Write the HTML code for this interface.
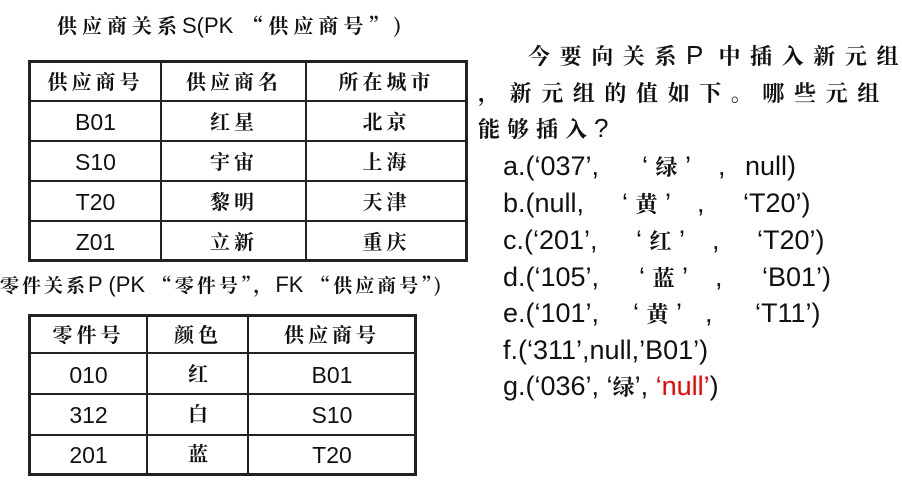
<!DOCTYPE html>
<html><head><meta charset="utf-8"><style>
body{margin:0;background:#fff;}
#p{position:relative;width:902px;height:488px;overflow:hidden;background:#fff;font-family:"Liberation Sans","Noto Sans CJK SC",sans-serif;color:#111;}
.a{position:absolute;white-space:pre;}
.h{position:absolute;height:2px;background:#222;}
.v{position:absolute;width:2px;background:#222;}
.c{position:absolute;text-align:center;white-space:pre;}
.cj{font-family:"Noto Serif CJK SC","Liberation Serif",serif;font-weight:bold;}
.t{font-size:20px;letter-spacing:4px;line-height:40px;}
.n{font-size:23px;line-height:40px;}
.l{position:absolute;left:503px;font-size:27px;line-height:30px;white-space:pre;}
.l span{position:absolute;top:0;white-space:pre;}
.k{font-family:"Noto Serif CJK SC",serif;font-size:22px;font-weight:bold;}
.lat{font-family:"Liberation Sans";letter-spacing:0;font-weight:normal;}
</style></head><body><div id="p">

<div class="a cj" style="left:57px;top:11px;font-size:20px;letter-spacing:5px;line-height:28px;">供应商关系<span class="lat" style="font-size:22px">S(PK</span> “供应商号”)</div>

<div class="h" style="left:28px;top:60px;width:440px;height:3px"></div>
<div class="h" style="left:28px;top:100px;width:440px"></div>
<div class="h" style="left:28px;top:140px;width:440px"></div>
<div class="h" style="left:28px;top:180px;width:440px"></div>
<div class="h" style="left:28px;top:220px;width:440px"></div>
<div class="h" style="left:28px;top:259px;width:440px;height:3px"></div>
<div class="v" style="left:28px;top:60px;height:202px;width:3px"></div>
<div class="v" style="left:160px;top:60px;height:202px"></div>
<div class="v" style="left:305px;top:60px;height:202px"></div>
<div class="v" style="left:465px;top:60px;height:202px;width:3px"></div>

<div class="c cj t" style="left:30px;top:61px;width:131px">供应商号</div>
<div class="c cj t" style="left:162px;top:61px;width:144px">供应商名</div>
<div class="c cj t" style="left:307px;top:61px;width:159px">所在城市</div>

<div class="c n" style="left:30px;top:102px;width:131px">B01</div>
<div class="c n" style="left:30px;top:142px;width:131px">S10</div>
<div class="c n" style="left:30px;top:182px;width:131px">T20</div>
<div class="c n" style="left:30px;top:222px;width:131px">Z01</div>
<div class="c cj t" style="left:162px;top:101px;width:144px">红星</div>
<div class="c cj t" style="left:162px;top:141px;width:144px">宇宙</div>
<div class="c cj t" style="left:162px;top:181px;width:144px">黎明</div>
<div class="c cj t" style="left:162px;top:221px;width:144px">立新</div>
<div class="c cj t" style="left:307px;top:101px;width:159px">北京</div>
<div class="c cj t" style="left:307px;top:141px;width:159px">上海</div>
<div class="c cj t" style="left:307px;top:181px;width:159px">天津</div>
<div class="c cj t" style="left:307px;top:221px;width:159px">重庆</div>

<div class="a cj" style="left:0px;top:271px;font-size:19px;letter-spacing:3px;line-height:28px;">零件关系<span class="lat" style="font-size:22px">P (PK</span> “零件号”，<span class="lat" style="font-size:22px">FK</span> “供应商号”)</div>

<div class="h" style="left:28px;top:314px;width:389px;height:3px"></div>
<div class="h" style="left:28px;top:352px;width:389px"></div>
<div class="h" style="left:28px;top:393px;width:389px"></div>
<div class="h" style="left:28px;top:434px;width:389px"></div>
<div class="h" style="left:28px;top:473px;width:389px;height:3px"></div>
<div class="v" style="left:28px;top:314px;height:162px;width:3px"></div>
<div class="v" style="left:146px;top:314px;height:162px"></div>
<div class="v" style="left:247px;top:314px;height:162px"></div>
<div class="v" style="left:414px;top:314px;height:162px;width:3px"></div>

<div class="c cj t" style="left:30px;top:314px;width:117px">零件号</div>
<div class="c cj t" style="left:148px;top:314px;width:100px">颜色</div>
<div class="c cj t" style="left:249px;top:314px;width:166px">供应商号</div>
<div class="c n" style="left:30px;top:355px;width:117px">010</div>
<div class="c n" style="left:30px;top:395px;width:117px">312</div>
<div class="c n" style="left:30px;top:435px;width:117px">201</div>
<div class="c cj t" style="left:148px;top:353px;width:100px;letter-spacing:0">红</div>
<div class="c cj t" style="left:148px;top:393px;width:100px;letter-spacing:0">白</div>
<div class="c cj t" style="left:148px;top:433px;width:100px;letter-spacing:0">蓝</div>
<div class="c n" style="left:249px;top:355px;width:166px">B01</div>
<div class="c n" style="left:249px;top:395px;width:166px">S10</div>
<div class="c n" style="left:249px;top:435px;width:166px">T20</div>

<div class="a k" style="left:528px;top:38px;letter-spacing:9.6px;line-height:34px">今要向关系<span class="lat" style="font-size:26px">P</span> 中插入新元组</div>
<div class="a k" style="left:478px;top:76px;letter-spacing:9.6px;line-height:34px">，新元组的值如下。哪些元组</div>
<div class="a k" style="left:478px;top:111px;letter-spacing:7px;line-height:34px">能够插入<span class="lat" style="font-size:26px">?</span></div>

<div class="l" style="top:151px"><span style="left:0">a.(‘037’,</span><span style="left:139px">‘ <b class="k">绿</b> ’</span><span style="left:215px">,</span><span style="left:242px">null)</span></div>
<div class="l" style="top:188px"><span style="left:0">b.(null,</span><span style="left:119px">‘ <b class="k">黄</b> ’</span><span style="left:194px">,</span><span style="left:240px">‘T20’)</span></div>
<div class="l" style="top:225px"><span style="left:0">c.(‘201’,</span><span style="left:133px">‘ <b class="k">红</b> ’</span><span style="left:209px">,</span><span style="left:254px">‘T20’)</span></div>
<div class="l" style="top:262px"><span style="left:0">d.(‘105’,</span><span style="left:136px">‘ <b class="k">蓝</b> ’</span><span style="left:212px">,</span><span style="left:259px">‘B01’)</span></div>
<div class="l" style="top:298px"><span style="left:0">e.(‘101’,</span><span style="left:130px">‘ <b class="k">黄</b> ’</span><span style="left:202px">,</span><span style="left:252px">‘T11’)</span></div>
<div class="l" style="top:335px"><span style="left:0">f.(‘311’,null,’B01’)</span></div>
<div class="l" style="top:371px"><span style="left:0">g.(‘036’, ‘<b class="k">绿</b>’, <span style="position:static;color:#e00">‘null’</span>)</span></div>

</div></body></html>
